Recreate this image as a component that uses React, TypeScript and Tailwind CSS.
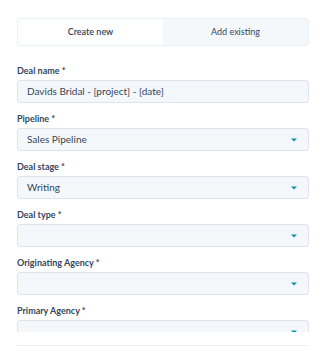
import React from "react";

const Caret = () => (
  <svg width="6" height="4" viewBox="0 0 6 4" className="absolute right-[11px] top-1/2 -translate-y-1/2">
    <path d="M0 0.5 H6 L3 3.5 Z" fill="#0091ae" />
  </svg>
);

const Field = ({ label, value, select }: { label: string; value?: string; select?: boolean }) => (
  <div className="flex flex-col">
    <div className="text-[9px] leading-[14px] font-bold text-[#33475b] mb-[2px]">{label}</div>
    <div className="relative h-[23px] rounded-[3px] border border-[#dfe3eb] bg-[#f5f8fa] flex items-center pl-[9px] text-[10px] text-[#33475b]">
      {value}
      {select && <Caret />}
    </div>
  </div>
);

export default function App() {
  return (
    <div className="w-[326px] h-[348px] bg-white overflow-hidden" style={{ fontFamily: "'Lato', 'Noto Sans', sans-serif" }}>
      <div className="h-[332px] overflow-hidden px-[17px] pt-[18px]">
        <div className="flex h-[28px] border border-[#eaf0f6] rounded-[3px]">
          <div className="w-[145px] bg-white flex items-center justify-center text-[9px] font-semibold text-[#33475b]">Create new</div>
          <div className="flex-1 bg-[#f5f8fa] flex items-center justify-center text-[9px] text-[#33475b]">Add existing</div>
        </div>
        <div className="mt-[18px] flex flex-col gap-[9px]">
          <Field label="Deal name *" value="Davids Bridal - [project] - [date]" />
          <Field label="Pipeline *" value="Sales Pipeline" select />
          <Field label="Deal stage *" value="Writing" select />
          <Field label="Deal type *" select />
          <Field label="Originating Agency *" select />
          <Field label="Primary Agency *" select />
        </div>
      </div>
      <div className="mx-[17px] mt-[13px] border-t border-[#eaf0f6]" />
    </div>
  );
}
